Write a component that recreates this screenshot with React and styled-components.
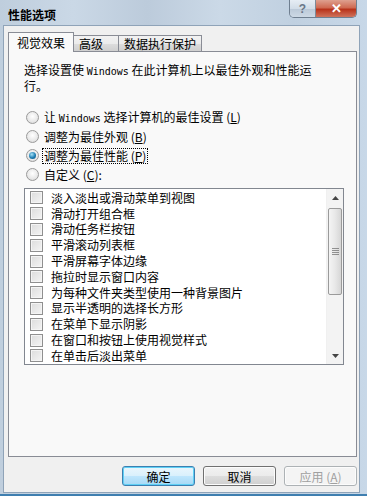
import React from "react";
import styled, { createGlobalStyle, css } from "styled-components";

const GlobalStyle = createGlobalStyle`
  html, body {
    margin: 0;
    padding: 0;
    background: #c4d3e3;
  }
  * {
    box-sizing: border-box;
  }
`;

const FONT = `"Noto Sans CJK SC", "Liberation Sans", sans-serif`;

const Window = styled.div`
  width: 367px;
  height: 496px;
  display: flex;
  flex-direction: column;
  font-family: ${FONT};
  font-size: 12px;
  color: #000;
  background: linear-gradient(90deg, #bfcedd 0%, #cad8e6 20%, #bccbdb 40%, #cbd9e7 60%, #c0d0e0 80%, #c8d8e8 100%);
  border-bottom: 2px solid #3f7fb0;
  overflow: hidden;
`;

const TitleBar = styled.div`
  height: 27px;
  display: flex;
  align-items: flex-start;
  padding-left: 8px;
`;

const Title = styled.div`
  font-weight: bold;
  font-size: 12px;
  line-height: 12px;
  margin-top: 9px;
  flex: 1;
`;

const CaptionButtons = styled.div`
  display: flex;
  margin-right: 10px;
  border: 1px solid #6f7f90;
  border-top: none;
  border-radius: 0 0 5px 5px;
  overflow: hidden;
`;

const CaptionButton = styled.div`
  height: 17px;
  display: flex;
  align-items: center;
  justify-content: center;
  font-family: "Liberation Sans", sans-serif;
  font-weight: bold;
  ${(p) =>
    p.$close
      ? css`
          width: 40px;
          background: linear-gradient(#dea08f 0%, #cf6a52 45%, #b8331b 55%, #d0735c 100%);
          color: #fff;
          font-size: 13px;
        `
      : css`
          width: 26px;
          background: linear-gradient(#e6edf4 0%, #d2dde8 50%, #bccad9 55%, #cdd9e5 100%);
          color: #6a7788;
          font-size: 12px;
          border-right: 1px solid #7d8a98;
        `}
`;

const Client = styled.div`
  flex: 1;
  margin: 0 7px 1px 3px;
  background: #f0f0f0;
  border: 1px solid #8fa3b8;
  display: flex;
  flex-direction: column;
  padding: 6px 2px 6px 4px;
`;

const Tabs = styled.div`
  display: flex;
  align-items: flex-end;
  height: 19px;
  position: relative;
  z-index: 1;
`;

const Tab = styled.div`
  border: 1px solid #898c95;
  border-bottom: none;
  display: flex;
  align-items: center;
  font-size: 12px;
  ${(p) =>
    p.$active
      ? css`
          padding: 0 8px;
          background: #f9f9f9;
          margin-bottom: -1px;
          height: 20px;
        `
      : css`
          height: 16px;
          min-width: 46px;
          padding: 0 5px;
          margin-left: -1px;
          background: linear-gradient(#f2f2f2 0%, #ebebeb 50%, #dddddd 51%, #cfcfcf 100%);
        `}
`;

const Panel = styled.div`
  height: 406px;
  border: 1px solid #898c95;
  background: #f9f9f9;
  padding: 11px 14px 0 15px;
`;

const Intro = styled.p`
  margin: 0 0 15px;
  line-height: 14px;
  font-size: 12px;
`;

const Latin = styled.span`
  font-family: "DejaVu Sans Mono", "Liberation Mono", monospace;
  font-size: 10px;
`;

const RadioRow = styled.label`
  display: flex;
  align-items: center;
  height: 19px;
  gap: 4px;
  padding-left: 2px;
`;

const RadioDot = styled.span`
  width: 13px;
  height: 13px;
  border-radius: 50%;
  border: 1px solid #9a9a9a;
  background: radial-gradient(circle at 50% 40%, #ffffff 0%, #e8e8e8 60%, #d0d0d0 100%);
  display: flex;
  align-items: center;
  justify-content: center;
  &::after {
    content: "";
    width: 7px;
    height: 7px;
    border-radius: 50%;
    background: ${(p) =>
      p.$checked ? "radial-gradient(circle at 40% 35%, #a7e2f7 0%, #1d7db2 55%, #0c4e78 100%)" : "transparent"};
  }
`;

const RadioText = styled.span`
  line-height: 14px;
  padding: 0 1px;
  outline: ${(p) => (p.$focus ? "1px dotted #000" : "none")};
`;

const Key = styled.span`
  text-decoration: underline;
`;

const ListBox = styled.div`
  margin: 4px 0 0 0;
  width: 320px;
  height: 177px;
  border: 1px solid #828790;
  background: #fff;
  display: flex;
`;

const Items = styled.div`
  flex: 1;
  padding: 1px 0 0 5px;
  overflow: hidden;
`;

const Item = styled.div`
  display: flex;
  align-items: center;
  height: 15.8px;
  line-height: 14px;
  gap: 8px;
`;

const Check = styled.span`
  width: 13px;
  height: 13px;
  border: 1px solid #8f8f8f;
  background: linear-gradient(135deg, #dcdcdc 0%, #f4f4f4 100%);
  box-shadow: inset 0 0 0 1px #f4f4f4;
  flex-shrink: 0;
`;

const ScrollBar = styled.div`
  width: 17px;
  background: #f3f3f3;
  border-left: 1px solid #f0f0f0;
  display: flex;
  flex-direction: column;
`;

const Arrow = styled.div`
  height: 17px;
  display: flex;
  align-items: center;
  justify-content: center;
  svg {
    display: block;
  }
`;

const Thumb = styled.div`
  height: 87px;
  margin: 2px 1px 0;
  border: 1px solid #9a9a9a;
  border-radius: 2px;
  background: linear-gradient(90deg, #f4f4f4 0%, #e8e8e8 50%, #d6d6d6 100%);
  display: flex;
  align-items: center;
  justify-content: center;
`;

const Grip = styled.div`
  width: 7px;
  height: 7px;
  background: repeating-linear-gradient(#555 0 1px, transparent 1px 2px);
  opacity: 0.6;
`;

const Track = styled.div`
  flex: 1;
`;

const ButtonRow = styled.div`
  display: flex;
  justify-content: flex-end;
  gap: 8px;
  margin-top: 9px;
`;

const Button = styled.div`
  width: 73px;
  height: 20px;
  border-radius: 3px;
  display: flex;
  align-items: center;
  justify-content: center;
  font-size: 12px;
  border: 1px solid ${(p) => (p.$default ? "#3c7fb1" : p.$disabled ? "#adb2b5" : "#707070")};
  color: ${(p) => (p.$disabled ? "#a0a0a0" : "#000")};
  background: ${(p) =>
    p.$default
      ? "linear-gradient(#eaf6fd 0%, #d9f0fc 50%, #bee6fd 51%, #a7d9f5 100%)"
      : p.$disabled
      ? "#f4f4f4"
      : "linear-gradient(#f2f2f2 0%, #ebebeb 50%, #dddddd 51%, #cfcfcf 100%)"};
  box-shadow: ${(p) => (p.$default ? "inset 0 0 0 1px #5fd0f5" : "inset 0 0 0 1px #fcfcfc")};
`;

const radios = [
  { text: <>让 <Latin>Windows</Latin> 选择计算机的最佳设置 (<Key>L</Key>)</> },
  { text: <>调整为最佳外观 (<Key>B</Key>)</> },
  { text: <>调整为最佳性能 (<Key>P</Key>)</>, checked: true },
  { text: <>自定义 (<Key>C</Key>):</> },
];

const items = [
  "淡入淡出或滑动菜单到视图",
  "滑动打开组合框",
  "滑动任务栏按钮",
  "平滑滚动列表框",
  "平滑屏幕字体边缘",
  "拖拉时显示窗口内容",
  "为每种文件夹类型使用一种背景图片",
  "显示半透明的选择长方形",
  "在菜单下显示阴影",
  "在窗口和按钮上使用视觉样式",
  "在单击后淡出菜单",
];

export default function App() {
  return (
    <>
      <GlobalStyle />
      <Window>
        <TitleBar>
          <Title>性能选项</Title>
          <CaptionButtons>
            <CaptionButton>?</CaptionButton>
            <CaptionButton $close>✕</CaptionButton>
          </CaptionButtons>
        </TitleBar>
        <Client>
          <Tabs>
            <Tab $active>视觉效果</Tab>
            <Tab>高级</Tab>
            <Tab>数据执行保护</Tab>
          </Tabs>
          <Panel>
            <Intro>
              选择设置使 <Latin>Windows</Latin> 在此计算机上以最佳外观和性能运
              <br />
              行。
            </Intro>
            {radios.map((r, i) => (
              <RadioRow key={i}>
                <RadioDot $checked={r.checked} />
                <RadioText $focus={r.checked}>{r.text}</RadioText>
              </RadioRow>
            ))}
            <ListBox>
              <Items>
                {items.map((t) => (
                  <Item key={t}>
                    <Check />
                    <span>{t}</span>
                  </Item>
                ))}
              </Items>
              <ScrollBar>
                <Arrow>
                  <svg width="7" height="4" viewBox="0 0 7 4">
                    <path d="M0 4 L3.5 0 L7 4 Z" fill="#444" />
                  </svg>
                </Arrow>
                <Thumb>
                  <Grip />
                </Thumb>
                <Track />
                <Arrow>
                  <svg width="7" height="4" viewBox="0 0 7 4">
                    <path d="M0 0 L3.5 4 L7 0 Z" fill="#444" />
                  </svg>
                </Arrow>
              </ScrollBar>
            </ListBox>
          </Panel>
          <ButtonRow>
            <Button $default>确定</Button>
            <Button>取消</Button>
            <Button $disabled>应用 (<Key>A</Key>)</Button>
          </ButtonRow>
        </Client>
      </Window>
    </>
  );
}
